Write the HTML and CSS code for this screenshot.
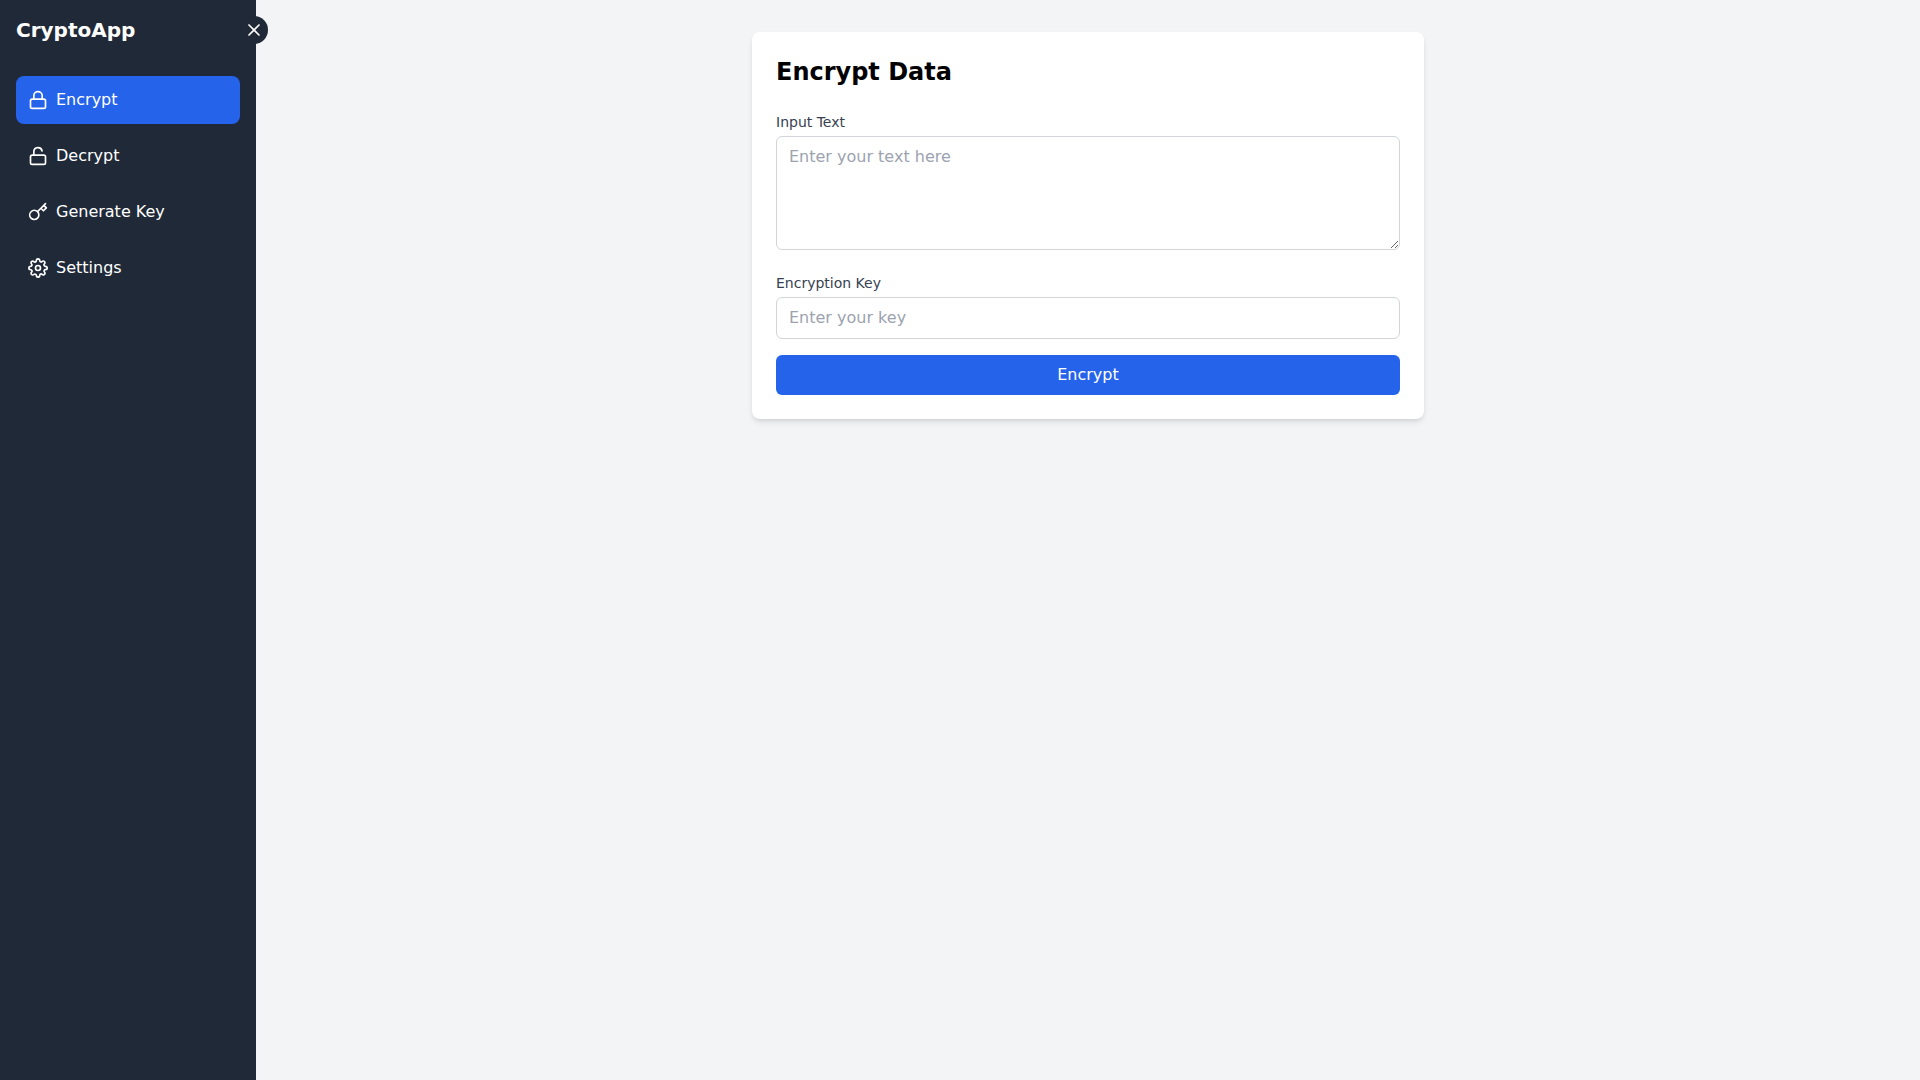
FILE: index.html
```
<!DOCTYPE html>
<html lang="en">
<head>
  <meta charset="UTF-8" />
  <meta name="viewport" content="width=device-width, initial-scale=1.0" />
  <title>CryptoApp</title>
  <link rel="stylesheet" href="styles.css">
</head>
<body>
  <div class="app">
    <!-- Sidebar -->
    <aside class="sidebar">
      <h1>CryptoApp</h1>
      <button type="button" class="toggle" aria-label="Close sidebar">
        <svg class="icon" viewBox="0 0 24 24"><line x1="18" y1="6" x2="6" y2="18" /><line x1="6" y1="6" x2="18" y2="18" /></svg>
      </button>

      <nav class="menu">
        <a href="#encrypt" class="active">
          <svg class="icon" viewBox="0 0 24 24"><rect x="3" y="11" width="18" height="11" rx="2" ry="2" /><path d="M7 11V7a5 5 0 0 1 10 0v4" /></svg>
          <span>Encrypt</span>
        </a>
        <a href="#decrypt">
          <svg class="icon" viewBox="0 0 24 24"><rect x="3" y="11" width="18" height="11" rx="2" ry="2" /><path d="M7 11V7a5 5 0 0 1 9.9-1" /></svg>
          <span>Decrypt</span>
        </a>
        <a href="#generate">
          <svg class="icon" viewBox="0 0 24 24"><path d="M21 2l-2 2m-7.61 7.61a5.5 5.5 0 1 1-7.778 7.778 5.5 5.5 0 0 1 7.777-7.777zm0 0L15.5 7.5m0 0l3 3L22 7l-3-3m-3.5 3.5L19 4" /></svg>
          <span>Generate Key</span>
        </a>
        <a href="#settings">
          <svg class="icon" viewBox="0 0 24 24"><circle cx="12" cy="12" r="3" /><path d="M19.4 15a1.65 1.65 0 0 0 .33 1.82l.06.06a2 2 0 0 1 0 2.83 2 2 0 0 1-2.83 0l-.06-.06a1.65 1.65 0 0 0-1.82-.33 1.65 1.65 0 0 0-1 1.51V21a2 2 0 0 1-2 2 2 2 0 0 1-2-2v-.09A1.65 1.65 0 0 0 9 19.4a1.65 1.65 0 0 0-1.82.33l-.06.06a2 2 0 0 1-2.83 0 2 2 0 0 1 0-2.83l.06-.06a1.65 1.65 0 0 0 .33-1.82 1.65 1.65 0 0 0-1.51-1H3a2 2 0 0 1-2-2 2 2 0 0 1 2-2h.09A1.65 1.65 0 0 0 4.6 9a1.65 1.65 0 0 0-.33-1.82l-.06-.06a2 2 0 0 1 0-2.83 2 2 0 0 1 2.83 0l.06.06a1.65 1.65 0 0 0 1.82.33H9a1.65 1.65 0 0 0 1-1.51V3a2 2 0 0 1 2-2 2 2 0 0 1 2 2v.09a1.65 1.65 0 0 0 1 1.51 1.65 1.65 0 0 0 1.82-.33l.06-.06a2 2 0 0 1 2.83 0 2 2 0 0 1 0 2.83l-.06.06a1.65 1.65 0 0 0-.33 1.82V9a1.65 1.65 0 0 0 1.51 1H21a2 2 0 0 1 2 2 2 2 0 0 1-2 2h-.09a1.65 1.65 0 0 0-1.51 1z" /></svg>
          <span>Settings</span>
        </a>
      </nav>
    </aside>

    <!-- Encrypt form -->
    <main class="content">
      <form class="card">
        <h2>Encrypt Data</h2>

        <div class="field">
          <label for="inputText">Input Text</label>
          <textarea id="inputText" rows="4" placeholder="Enter your text here"></textarea>
        </div>

        <div class="field">
          <label for="encryptionKey">Encryption Key</label>
          <input type="text" id="encryptionKey" placeholder="Enter your key" />
        </div>

        <button type="submit" class="submit">Encrypt</button>
      </form>
    </main>
  </div>
</body>
</html>
```
FILE: styles.css
```
* {
  box-sizing: border-box;
}

body {
  margin: 0;
  font-family: "DejaVu Sans", sans-serif;
  font-size: 16px;
  line-height: 24px;
  color: #000;
  background: #f3f4f6;
}

h1,
h2 {
  margin: 0;
}

button,
input,
textarea {
  font: inherit;
}

.app {
  display: flex;
  min-height: 100vh;
}

.icon {
  display: block;
  flex-shrink: 0;
  width: 20px;
  height: 20px;
  fill: none;
  stroke: currentColor;
  stroke-width: 2;
  stroke-linecap: round;
  stroke-linejoin: round;
}

/* Sidebar */
.sidebar {
  position: relative;
  flex-shrink: 0;
  width: 256px;
  padding: 16px;
  background: #1f2937;
  color: #fff;
}

.sidebar h1 {
  font-size: 20px;
  line-height: 28px;
}

/* Round button over the sidebar edge */
.toggle {
  position: absolute;
  top: 16px;
  right: -12px;
  padding: 4px;
  background: #1f2937;
  color: #fff;
  border: none;
  border-radius: 50%;
  cursor: pointer;
}

.menu {
  display: flex;
  flex-direction: column;
  gap: 8px;
  margin-top: 32px;
}

.menu a {
  display: flex;
  align-items: center;
  gap: 8px;
  padding: 12px;
  color: #fff;
  text-decoration: none;
  border-radius: 8px;
}

.menu a:hover {
  background: #374151;
}

.menu a.active {
  background: #2563eb;
}

/* Form */
.content {
  flex: 1;
  padding: 32px;
}

.card {
  max-width: 672px;
  margin: 0 auto;
  padding: 24px;
  background: #fff;
  border-radius: 8px;
  box-shadow: 0 4px 6px -1px rgba(0, 0, 0, 0.1), 0 2px 4px -2px rgba(0, 0, 0, 0.1);
}

.card h2 {
  margin-bottom: 24px;
  font-size: 24px;
  line-height: 32px;
}

.field {
  margin-bottom: 16px;
}

.field label {
  display: block;
  margin-bottom: 4px;
  font-size: 14px;
  line-height: 20px;
  color: #374151;
}

.field input,
.field textarea {
  width: 100%;
  padding: 8px 12px;
  background: #fff;
  border: 1px solid #d1d5db;
  border-radius: 6px;
}

.field input::placeholder,
.field textarea::placeholder {
  color: #9ca3af;
}

.submit {
  display: block;
  width: 100%;
  padding: 8px 16px;
  background: #2563eb;
  color: #fff;
  border: none;
  border-radius: 6px;
  cursor: pointer;
}

.submit:hover {
  background: #1d4ed8;
}
```
